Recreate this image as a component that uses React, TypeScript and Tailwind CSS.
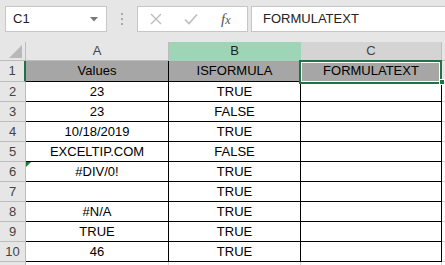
import React from "react";

const rows: [string, string][] = [
  ["23", "TRUE"],
  ["23", "FALSE"],
  ["10/18/2019", "TRUE"],
  ["EXCELTIP.COM", "FALSE"],
  ["#DIV/0!", "TRUE"],
  ["", "TRUE"],
  ["#N/A", "TRUE"],
  ["TRUE", "TRUE"],
  ["46", "TRUE"],
];

export default function App() {
  return (
    <div
      className="w-[445px] h-[265px] overflow-hidden bg-[#e6e6e6] text-black"
      style={{ fontFamily: '"Liberation Sans", Arial, sans-serif' }}
    >
      {/* formula bar */}
      <div className="flex items-start h-[42px] pt-[6px]">
        <div className="ml-[5px] w-[102px] h-[26px] bg-white border border-[#c6c6c6] flex items-center justify-between pl-[7px] pr-[8px]">
          <span className="text-[13px] text-[#222]">C1</span>
          <svg width="8" height="5" viewBox="0 0 8 5">
            <path d="M0 0 L8 0 L4 4.5 Z" fill="#777" />
          </svg>
        </div>
        <div className="w-[30px] h-[26px] flex flex-col items-center justify-center gap-[3px]">
          <span className="w-[2px] h-[2px] bg-[#a8a8a8]" />
          <span className="w-[2px] h-[2px] bg-[#a8a8a8]" />
          <span className="w-[2px] h-[2px] bg-[#a8a8a8]" />
        </div>
        <div className="w-[111px] h-[26px] bg-white border border-[#c6c6c6] flex items-center">
          <svg width="12" height="12" viewBox="0 0 12 12" className="ml-[12px]">
            <path d="M1 1 L11 11 M11 1 L1 11" stroke="#bdbdbd" strokeWidth="1.4" />
          </svg>
          <svg width="14" height="12" viewBox="0 0 14 12" className="ml-[22px]">
            <path d="M1 6.5 L5 10.5 L13 1.5" stroke="#bdbdbd" strokeWidth="1.6" fill="none" />
          </svg>
          <span
            className="ml-[23px] text-[15px] italic text-[#555]"
            style={{ fontFamily: '"Liberation Serif", "Times New Roman", serif' }}
          >
            f<span className="text-[12px]">x</span>
          </span>
        </div>
        <div className="ml-[3px] flex-1 h-[26px] bg-white border border-r-0 border-[#c6c6c6] flex items-center pl-[11px]">
          <span className="text-[13px] text-[#222]">FORMULATEXT</span>
        </div>
      </div>

      {/* column headers */}
      <div className="flex h-[19px] text-[13px] text-[#444]">
        <div className="w-[26px] border-r border-b border-[#bcbcbc] flex items-end justify-end pr-[3px] pb-[2px]">
          <svg width="13" height="13" viewBox="0 0 13 13">
            <path d="M13 0 L13 13 L0 13 Z" fill="#b8b8b8" />
          </svg>
        </div>
        <div className="w-[143px] border-r border-b border-[#bcbcbc] flex items-center justify-center">A</div>
        <div className="w-[132px] bg-[#9fd5b7] border-r border-b border-[#9fd5b7] flex items-center justify-center text-[#222]">B</div>
        <div className="w-[141px] bg-[#d4d4d4] border-r border-b border-[#bcbcbc] flex items-center justify-center">C</div>
        <div className="flex-1 border-b border-[#bcbcbc]" />
      </div>

      {/* row 1 */}
      <div className="flex h-[21px] text-[13px]">
        <div className="w-[26px] border-r-2 border-[#217346] border-b border-b-[#bcbcbc] flex items-center justify-center text-[#444]">1</div>
        <div className="w-[143px] bg-[#a6a6a6] border-r border-b border-black flex items-center justify-center">Values</div>
        <div className="w-[132px] bg-[#a6a6a6] border-r border-b border-black flex items-center justify-center">ISFORMULA</div>
        <div className="relative w-[141px] bg-[#a6a6a6] border-r border-b border-black flex items-center justify-center">
          FORMULATEXT
          <div className="absolute -left-[2px] -top-[1px] w-[143px] h-[24px] border-2 border-[#217346]">
            <div className="w-full h-full border border-white" />
          </div>
          <div className="absolute -right-[4px] -bottom-[4px] w-[6px] h-[6px] bg-[#217346] border border-white" />
        </div>
        <div className="flex-1 border-b border-[#d4d4d4]" />
      </div>

      {rows.map(([a, b], i) => (
        <div key={i} className="flex h-[20px] text-[13px]">
          <div className="w-[26px] border-r border-b border-[#bcbcbc] flex items-center justify-center text-[#444]">
            {i + 2}
          </div>
          <div className="relative w-[143px] bg-white border-r border-b border-black flex items-center justify-center">
            {a}
            {i === 4 && (
              <svg width="5" height="5" viewBox="0 0 5 5" className="absolute left-0 top-0">
                <path d="M0 0 L5 0 L0 5 Z" fill="#1e7b34" />
              </svg>
            )}
          </div>
          <div className="w-[132px] bg-white border-r border-b border-black flex items-center justify-center">{b}</div>
          <div className="w-[141px] bg-white border-r border-b border-black" />
          <div className="flex-1 bg-white border-b border-[#d4d4d4]" />
        </div>
      ))}

      <div className="flex h-[20px]">
        <div className="w-[26px] border-r border-[#bcbcbc]" />
        <div className="w-[143px] bg-white border-r border-[#d4d4d4]" />
        <div className="w-[132px] bg-white border-r border-[#d4d4d4]" />
        <div className="w-[141px] bg-white border-r border-[#d4d4d4]" />
        <div className="flex-1 bg-white" />
      </div>
    </div>
  );
}
